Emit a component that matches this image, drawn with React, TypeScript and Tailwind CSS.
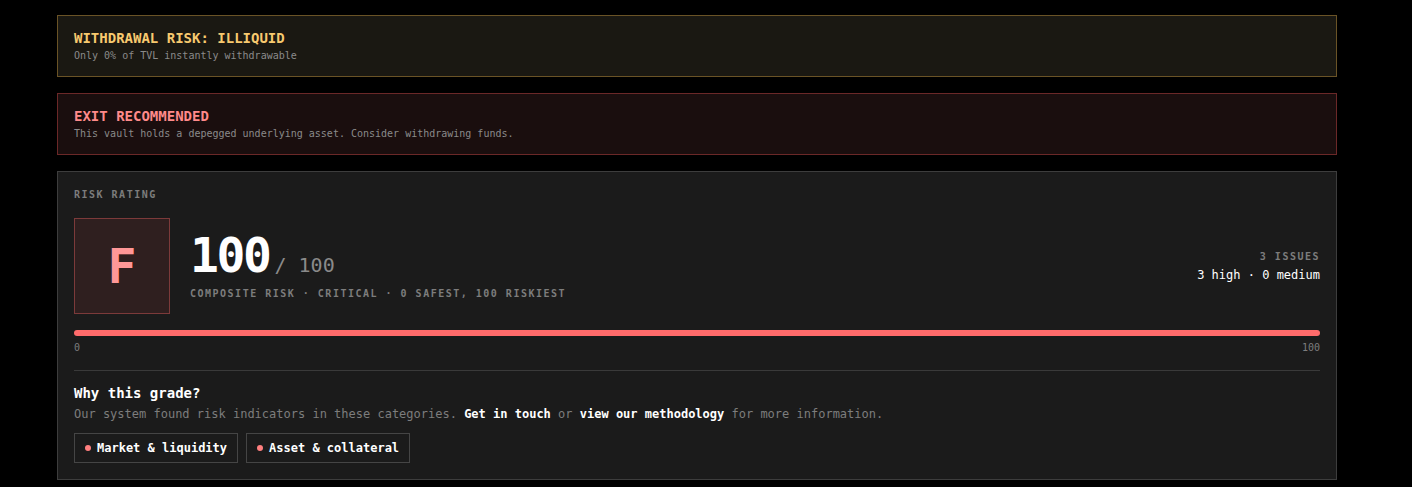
import React from "react";

const mono = { fontFamily: '"DejaVu Sans Mono", "Liberation Mono", monospace' };

function Chip({ label }: { label: string }) {
  return (
    <div className="flex h-[30px] items-center gap-[6px] border border-[#454545] px-[10px]">
      <span className="h-[6px] w-[6px] rounded-full bg-[#ff7f7f]" />
      <span className="text-[12px] font-bold text-white">{label}</span>
    </div>
  );
}

export default function App() {
  return (
    <div className="min-h-screen bg-black pl-[57px] pt-[15px]" style={mono}>
      <div className="flex w-[1280px] flex-col gap-4">
        <div className="border border-[#6a5326] bg-[#1a1812] px-4 py-3">
          <div className="text-[14px] font-bold leading-5 text-[#f7c96f]">WITHDRAWAL RISK: ILLIQUID</div>
          <div className="text-[10px] leading-4 text-[#8a8a8a]">Only 0% of TVL instantly withdrawable</div>
        </div>

        <div className="border border-[#6b2828] bg-[#1a0e0e] px-4 py-3">
          <div className="text-[14px] font-bold leading-5 text-[#ff8a8a]">EXIT RECOMMENDED</div>
          <div className="text-[10px] leading-4 text-[#8a8a8a]">This vault holds a depegged underlying asset. Consider withdrawing funds.</div>
        </div>

        <div className="border border-[#3d3d3d] bg-[#1b1b1b] p-4">
          <div className="text-[10px] font-bold leading-[14px] tracking-[0.15em] text-[#7d7d7d]">RISK RATING</div>

          <div className="mt-4 flex items-center">
            <div className="flex h-24 w-24 items-center justify-center border border-[#7c3a3a] bg-[#2f1f1f]">
              <span className="text-[48px] font-bold leading-none text-[#ff9797]">F</span>
            </div>
            <div className="ml-5 flex flex-col">
              <div className="flex items-baseline">
                <span className="text-[48px] font-bold leading-none tracking-tighter text-white">100</span>
                <span className="ml-[5px] text-[20px] leading-none text-[#8a8a8a]">/ 100</span>
              </div>
              <div className="mt-[8px] text-[10px] font-bold leading-[14px] tracking-[0.15em] text-[#7d7d7d]">
                COMPOSITE RISK · CRITICAL · 0 SAFEST, 100 RISKIEST
              </div>
            </div>
            <div className="ml-auto flex flex-col items-end">
              <div className="text-[10px] font-bold leading-[14px] tracking-[0.15em] text-[#7d7d7d]">3 ISSUES</div>
              <div className="mt-[3px] text-[12px] leading-4 text-white">3 high · 0 medium</div>
            </div>
          </div>

          <div className="mt-4 h-[6px] rounded-full bg-[#ff6b6b]" />
          <div className="mt-[5px] flex justify-between text-[10px] leading-[14px] text-[#7d7d7d]">
            <span>0</span>
            <span>100</span>
          </div>

          <div className="mt-[15px] border-t border-[#3a3a3a]" />

          <div className="mt-[12px] text-[14px] font-bold leading-5 text-white">Why this grade?</div>
          <div className="mt-[3px] text-[12px] leading-4 text-[#7d7d7d]">
            Our system found risk indicators in these categories.{" "}
            <span className="font-bold text-white">Get in touch</span> or{" "}
            <span className="font-bold text-white">view our methodology</span> for more information.
          </div>

          <div className="mt-[11px] flex gap-2">
            <Chip label="Market & liquidity" />
            <Chip label="Asset & collateral" />
          </div>
        </div>
      </div>
    </div>
  );
}
